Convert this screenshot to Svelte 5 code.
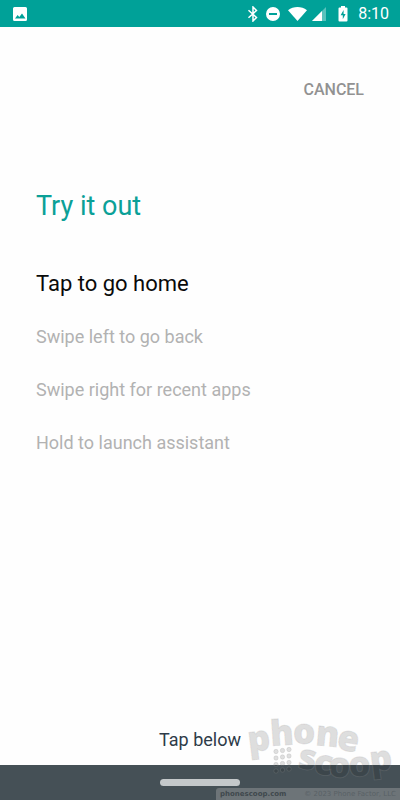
<script>
  const steps = [
    'Tap to go home',
    'Swipe left to go back',
    'Swipe right for recent apps',
    'Hold to launch assistant'
  ];
  let current = $state(0);
  const dots = [0, 1, 2, 3].flatMap((row) => [0, 1, 2].map((col) => ({ row, col })));
</script>

<div class="screen">
  <header class="status">
    <svg class="picture" width="14" height="14" viewBox="0 0 14 14" aria-label="Screenshot saved">
      <path fill="#fff" fill-rule="evenodd" d="M1.500 0h11A1.500 1.500 0 0 1 14 1.500v11a1.500 1.500 0 0 1-1.500 1.500h-11A1.500 1.500 0 0 1 0 12.500v-11A1.500 1.500 0 0 1 1.500 0zM2 11.500h10.500L9 6.500 6.300 10 4.600 8z" />
    </svg>
    <div class="indicators">
      <svg width="12" height="16" viewBox="0 0 12 16" aria-label="Bluetooth">
        <path d="M1.500 4.300 9.500 11.500 6 15V1l3.500 3.500-8 7.200" fill="none" stroke="#fff" stroke-width="1.500" />
      </svg>
      <svg class="dnd" width="14" height="14" viewBox="0 0 14 14" aria-label="Do not disturb">
        <path fill="#fff" fill-rule="evenodd" d="M7 0a7 7 0 1 1 0 14A7 7 0 0 1 7 0zM3 5.900v2.200h8V5.900z" />
      </svg>
      <svg class="wifi" width="19" height="14" viewBox="0 0 19 14" aria-label="Wi-Fi">
        <path fill="#fff" d="M9.500 14 0 3.200C5.500-1 13.500-1 19 3.200z" />
      </svg>
      <svg class="cell" width="14" height="14" viewBox="0 0 14 14" aria-label="Mobile signal">
        <path fill="#fff" opacity=".35" d="M14 0v14H0z" />
        <path fill="#fff" d="M10 4v10H0z" />
      </svg>
      <svg class="battery" width="10" height="16" viewBox="0 0 10 16" aria-label="Battery charging">
        <path fill="#fff" fill-rule="evenodd" d="M3 0h4v1.600h1.500q1 0 1 1v12q0 1-1 1h-7q-1 0-1-1v-12q0-1 1-1H3zM5.600 4 2.600 9.300h2.200v4L7.600 8H5.600z" />
      </svg>
      <time>8:10</time>
    </div>
  </header>

  <main>
    <div class="actions"><button class="cancel" type="button" onclick={() => (current = 0)}>CANCEL</button></div>
    <h1>Try it out</h1>
    <ol>
      {#each steps as step, i}
        <li class:active={i === current}>{step}</li>
      {/each}
    </ol>
    <p class="hint">Tap below</p>
  </main>

  <nav>
    <button class="home" type="button" aria-label="Home" onclick={() => (current = Math.min(current + 1, 3))}></button>
  </nav>

  <div class="watermark">
    <svg width="152" height="72" viewBox="248 714 152 72">
      <g class="mark">
        <text x="249 271 293 315 336" y="752 746 744 745 749" rotate="-7 -4 0 5 9">phone</text>
        <text x="297 313 328 349 371" y="768 774 777 777 772" rotate="9 6 2 -3 -7">scoop</text>
        {#each dots as { row, col }}
          <circle cx={276 + col * 6.5} cy={751.5 + row * 6.5 - col} r="2.2" />
        {/each}
      </g>
    </svg>
    <div class="credit"><b>phonescoop.com</b><span>© 2023 Phone Factor, LLC</span></div>
  </div>
</div>

<style>
  :global(body) { margin: 0; background: #fff; }
  .screen {
    position: relative;
    display: flex;
    flex-direction: column;
    min-height: 100vh;
    font-family: Roboto, sans-serif;
    background: #fefefe;
  }
  .status {
    display: flex;
    align-items: center;
    justify-content: space-between;
    height: 27px;
    padding: 0 11px 0 13px;
    background: #00a198;
    color: #fff;
  }
  .indicators { display: flex; align-items: center; }
  .dnd { margin-left: 7px; }
  .wifi { margin-left: 8px; }
  .cell { margin-left: 5px; }
  .battery { margin-left: 12px; }
  time { margin-left: 10px; font-size: 16px; line-height: 20px; }
  main {
    flex: 1;
    display: flex;
    flex-direction: column;
    padding: 49px 36px 12px;
  }
  .actions { display: flex; justify-content: flex-end; }
  button { border: 0; padding: 0; cursor: pointer; font-family: inherit; }
  .cancel {
    background: none;
    color: #929292;
    font-size: 16px;
    font-weight: 500;
    line-height: 28px;
  }
  h1 {
    margin: 86px 0 0;
    color: #0ba097;
    font-size: 27px;
    font-weight: 400;
    line-height: 32px;
  }
  ol { margin: 48px 0 0; padding: 0; list-style: none; }
  li { margin-bottom: 25px; color: #b2b2b2; font-size: 18px; line-height: 28px; }
  li.active { color: #0a0a0a; font-size: 22px; }
  .hint {
    margin: auto 0 0;
    color: #2e3b48;
    font-size: 18px;
    line-height: 26px;
    text-align: center;
  }
  nav {
    display: flex;
    align-items: center;
    justify-content: center;
    height: 35px;
    background: #455056;
  }
  .home { width: 80px; height: 7px; border-radius: 4px; background: #c4c8ca; }
  .watermark {
    position: absolute;
    right: 0;
    bottom: 0;
    display: flex;
    flex-direction: column;
    align-items: flex-end;
    pointer-events: none;
  }
  .watermark svg { display: block; margin-bottom: 2px; overflow: visible; }
  .mark { fill: rgba(0, 0, 0, 0.12); stroke: rgba(150, 150, 150, 0.22); stroke-width: 1px; }
  .mark text { font: 800 35px "Open Sans", sans-serif; }
  .credit {
    display: flex;
    justify-content: space-between;
    box-sizing: border-box;
    width: 184px;
    height: 12px;
    padding: 0 4px;
    border-radius: 3px 0 0 0;
    background: #6d7478;
    color: #596166;
    font: 7px/12px "DejaVu Sans", sans-serif;
    white-space: nowrap;
  }
  .credit b { color: #3f484d; }
</style>
